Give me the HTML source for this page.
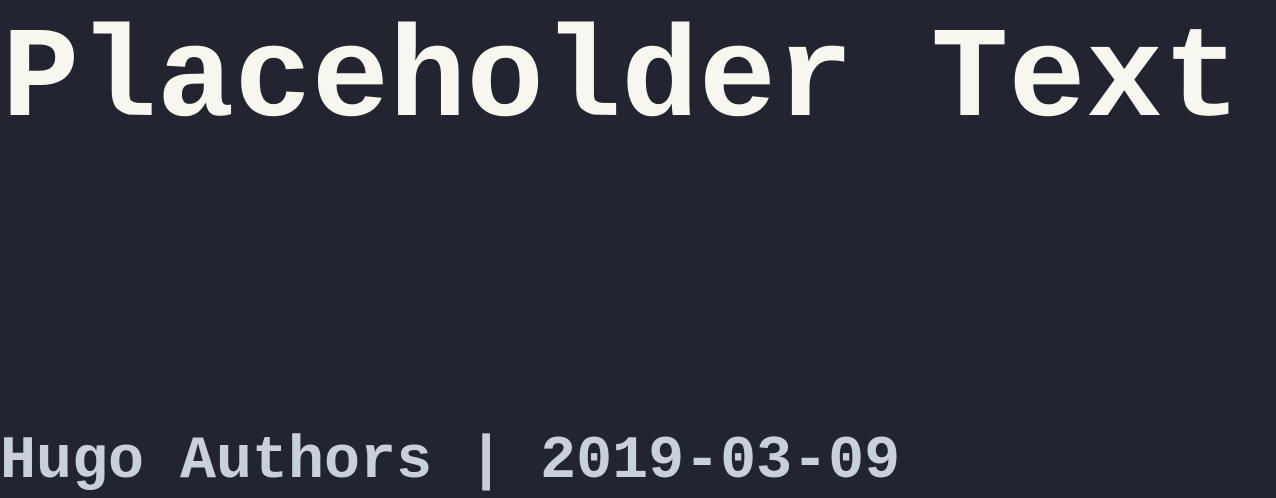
<!DOCTYPE html>
<html><head><style>
html,body{margin:0;padding:0;width:1276px;height:498px;overflow:hidden;background:#22242f;}
.h{position:absolute;left:2px;top:17px;font:bold 129px/1 "Liberation Mono",monospace;color:#f7f7f0;white-space:pre;}
.f{position:absolute;left:0;top:432px;font:bold 60px/1 "Liberation Mono",monospace;color:#c9d0da;white-space:pre;}
</style></head><body>
<div class="h">Placeholder Text</div>
<div class="f">Hugo Authors | 2019-03-09</div>
</body></html>
